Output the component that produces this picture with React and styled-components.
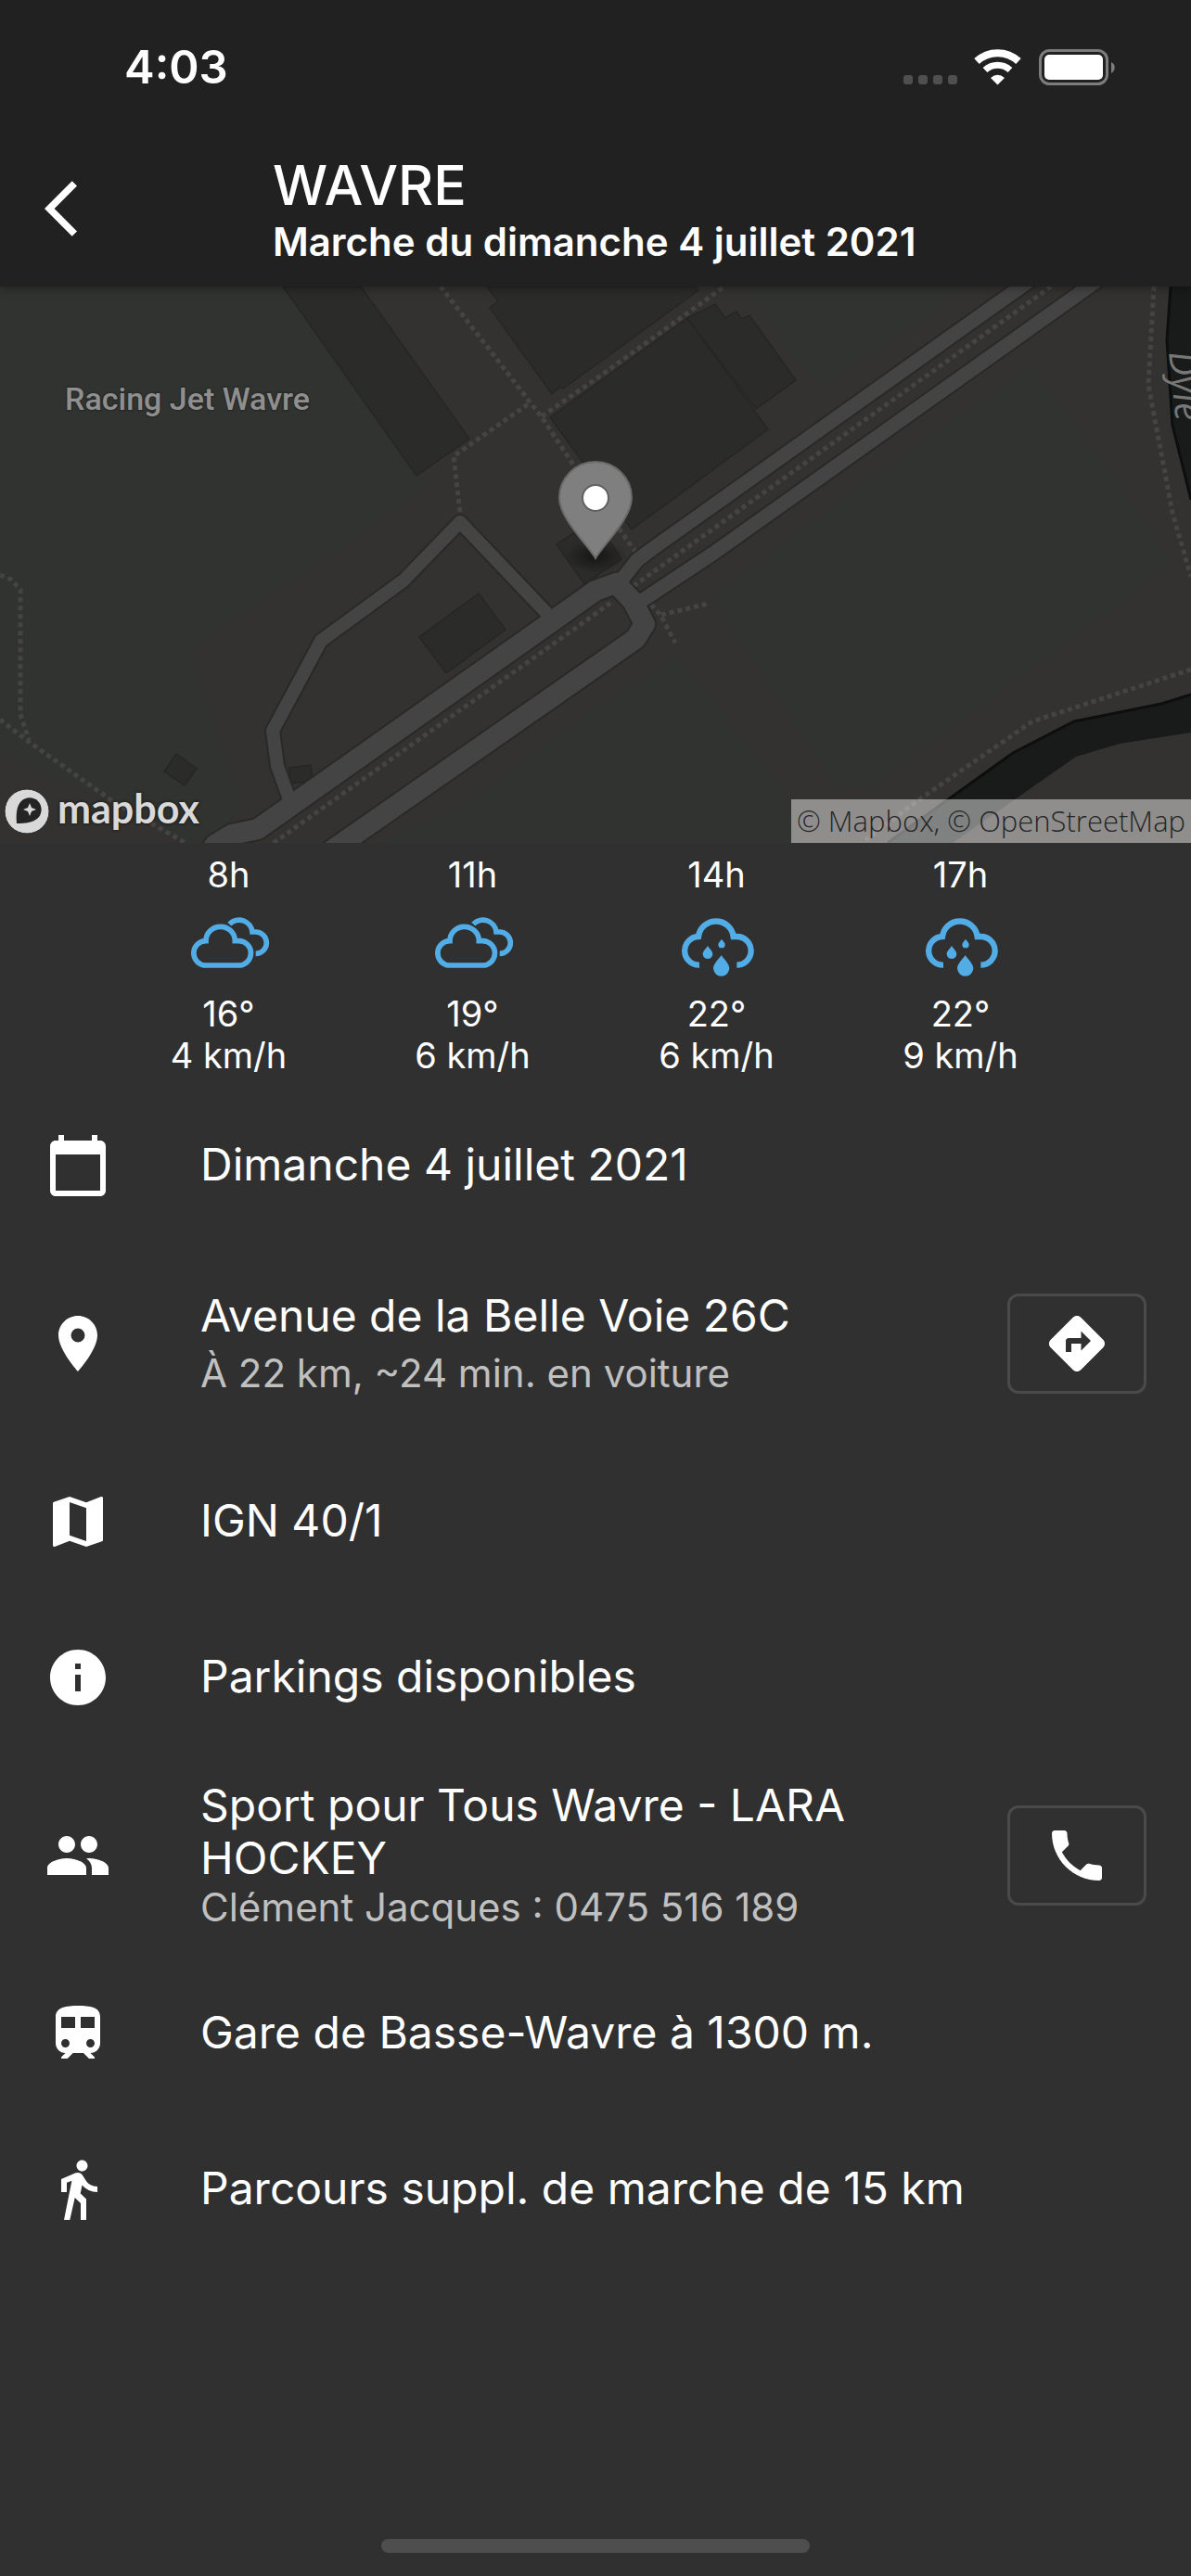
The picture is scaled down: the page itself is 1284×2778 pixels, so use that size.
import React from "react";
import styled, { createGlobalStyle } from "styled-components";
import {
  MdArrowBackIos,
  MdCalendarToday,
  MdLocationOn,
  MdMap,
  MdInfo,
  MdPeople,
  MdTrain,
  MdDirectionsWalk,
  MdDirections,
  MdPhone,
} from "react-icons/md";

const GlobalStyle = createGlobalStyle`
  *, *::before, *::after { box-sizing: border-box; }
  body {
    margin: 0;
    background: #303030;
    color: #fff;
    font-family: Inter, "Liberation Sans", sans-serif;
  }
`;

const Screen = styled.div`
  display: flex;
  flex-direction: column;
  min-height: 100vh;
`;

const Header = styled.header`
  position: relative;
  z-index: 1;
  background: #212121;
  box-shadow: 0 2px 10px rgba(0, 0, 0, 0.35);
`;

const StatusBar = styled.div`
  display: flex;
  align-items: center;
  justify-content: space-between;
  height: 141px;
  padding: 4px 82px 0 134px;
`;

const Clock = styled.time`
  font-size: 49px;
  line-height: 60px;
  font-weight: 600;
`;

const StatusIcons = styled.div`
  display: flex;
  align-items: center;
  gap: 16px;
`;

const Toolbar = styled.div`
  display: flex;
  align-items: center;
  gap: 174px;
  height: 168px;
  padding: 0 48px;
`;

const BackButton = styled.button`
  display: flex;
  padding: 0;
  border: 0;
  background: none;
  color: inherit;
  font-size: 72px;
`;

const Title = styled.h1`
  margin: 0;
  font-size: 59px;
  line-height: 72px;
  font-weight: 500;
`;

const Subtitle = styled.p`
  margin: 0;
  font-size: 42px;
  line-height: 50px;
  font-weight: 600;
`;

const MapPanel = styled.section`
  position: relative;
  height: 600px;
  overflow: hidden;
  background: #343230;
`;

const MapDrawing = styled.svg`
  display: block;
  width: 100%;
  height: 100%;
`;

const MapLogo = styled.a`
  position: absolute;
  left: 4px;
  bottom: 6px;
  display: flex;
  align-items: center;
  gap: 8px;
  color: #d9d9d9;
  font-family: Lato, sans-serif;
  font-size: 43px;
  line-height: 50px;
  font-weight: 700;
  text-decoration: none;
  text-shadow: 0 0 3px #1c1c1c, 0 0 3px #1c1c1c;

  span {
    padding-bottom: 6px;
  }
`;

const Attribution = styled.div`
  position: absolute;
  right: 0;
  bottom: 0;
  padding: 0 6px;
  background: rgba(255, 255, 255, 0.45);
  color: #262626;
  font-family: "Open Sans", "Noto Sans", sans-serif;
  font-size: 31px;
  line-height: 47px;
  font-weight: 300;
  white-space: nowrap;

  a {
    color: inherit;
    text-decoration: none;
  }
`;

const Forecast = styled.ul`
  display: grid;
  grid-template-columns: repeat(4, 1fr);
  margin: 0;
  padding: 12px 117px 12px 115px;
  list-style: none;
`;

const Slot = styled.li`
  display: flex;
  flex-direction: column;
  align-items: center;
  font-size: 38px;
  line-height: 45px;
`;

const WeatherIcon = styled.svg`
  width: 90px;
  height: 105px;
`;

const Details = styled.ul`
  margin: 0;
  padding: 0;
  list-style: none;
`;

const Row = styled.li`
  display: flex;
  align-items: center;
  gap: 48px;
  min-height: ${(p) => (p.$tall ? 216 : 168)}px;
  padding: 0 48px;
`;

const RowIcon = styled.span`
  display: flex;
  width: 120px;
  font-size: 72px;
`;

const RowText = styled.div`
  display: flex;
  flex: 1;
  flex-direction: column;
  gap: ${(p) => (p.$dense ? 0 : 9)}px;
  padding-bottom: 3px;
`;

const RowTitle = styled.span`
  font-size: 48px;
  line-height: 57px;
`;

const RowNote = styled.span`
  color: #c0c0c0;
  font-size: 42px;
  line-height: 50px;
`;

const ActionButton = styled.button`
  display: flex;
  align-items: center;
  justify-content: center;
  width: 150px;
  height: 108px;
  padding: 0;
  border: 3px solid #4a4a4a;
  border-radius: 12px;
  background: none;
  color: inherit;
  font-size: 72px;
`;

const HomeIndicator = styled.div`
  width: 36%;
  height: 15px;
  margin: auto auto 25px;
  border-radius: 8px;
  background: #4e4e4e;
`;

function StatusGlyphs() {
  return (
    <StatusIcons>
      <svg width="60" height="40" viewBox="0 0 60 40" fill="#4f4f4f" aria-hidden="true">
        <rect x="0" y="28" width="10" height="10" rx="3" />
        <rect x="16" y="28" width="10" height="10" rx="3" />
        <rect x="32" y="28" width="10" height="10" rx="3" />
        <rect x="48" y="28" width="10" height="10" rx="3" />
      </svg>
      <svg width="52" height="40" viewBox="0 0 52 40" aria-hidden="true">
        <path d="M3 14A33 33 0 0 1 48 14" transform="translate(0 -1)" fill="none" stroke="#fff" strokeWidth="8" />
        <path d="M12 22.500A20 20 0 0 1 39 22.500" fill="none" stroke="#fff" strokeWidth="7" />
        <path d="M18 31q7.500-6.500 15 0l-7.500 7.500z" fill="#fff" />
      </svg>
      <svg width="84" height="40" viewBox="0 0 84 40" aria-hidden="true">
        <rect x="3.500" y="1.500" width="72" height="36" rx="10" fill="none" stroke="#7c7c7c" strokeWidth="3" />
        <rect x="8" y="6" width="63" height="27" rx="5" fill="#fff" />
        <path d="M80 14c5 2 5 9.500 0 12z" fill="#7c7c7c" />
      </svg>
    </StatusIcons>
  );
}

const parks = [
  "0,0 305,0 449,204 463,210 442,228 336,305 205,390 217,438 233,477 262,560 240,585 215,600 197,600 123,560 0,501",
  "806,0 1045,0 888,106 858,80 820,25",
  "1113,84 1195,197 1264,299 1105,418 937,541 904,541 765,335 929,212",
  "410,600 504,556 642,453 730,398 847,545 860,600",
];

const buildings = [
  "305,0 389,0 506,164 449,204",
  "525,0 537,16 528,23 595,116 604,108 607,110 753,4 750,0",
  "593,141 741,34 828,154 681,262",
  "741,34 771,19 782,34 794,27 800,35 808,31 858,101 815,132",
  "600,278 642,251 670,294 630,321",
  "516,331 545,370 481,417 452,378",
  "190,504 212,520 199,538 177,523",
  "312,519 335,516 337,533 313,536",
];

const roads = [
  { width: 14, points: "594,357 496,254 435,317 346,382 294,479 299,517 313,556" },
  { width: 15, points: "664,324 687,295 703,283 1115,-10" },
  { width: 15, points: "684,344 770,287 1188,-10" },
  { width: 22, points: "220,618 232,602 250,591 278,585 642,328 664,320 682,339 695,364 685,380 642,410 355,610" },
];

const footpaths = [
  "475,0 584,141 620,195 685,286",
  "584,140 642,100 781,0",
  "569,127 489,183 496,244",
  "295,600 642,353 658,341",
  "683,323 1133,0",
  "0,311 12,316 22,327 22,461 31,489",
  "0,467 31,491 123,556 200,600",
  "1244,0 1238,106 1264,244 1284,313",
  "1284,413 1113,469 990,554 929,600",
  "702,343 712,354 728,384",
  "713,354 763,342",
];

function StreetMap() {
  return (
    <MapDrawing viewBox="0 0 1284 600" preserveAspectRatio="xMidYMid slice" role="img" aria-label="Carte du lieu de départ">
      <defs>
        <radialGradient id="pinShadow">
          <stop offset="0" stopColor="#111" stopOpacity="0.8" />
          <stop offset="1" stopColor="#111" stopOpacity="0" />
        </radialGradient>
      </defs>
      <rect width="1284" height="600" fill="#343230" />
      {parks.map((p) => (
        <polygon key={p} points={p} fill="#313330" />
      ))}
      <g fill="#191b1a">
        <polygon points="1262,0 1258,58 1264,149 1284,230 1284,0" />
        <polygon points="1284,440 1252,450 1158,469 1092,503 957,600 1027,600 1160,507 1207,493 1284,481" />
      </g>
      <g fill="none" stroke="#0d0f0e" strokeWidth="3">
        <polyline points="1262,0 1258,58 1264,149 1284,230" />
        <polyline points="1284,440 1252,450 1158,469 1092,503 957,600" />
      </g>
      {buildings.map((p) => (
        <polygon key={p} points={p} fill="#2b2b29" stroke="#262625" strokeWidth="1.500" />
      ))}
      {footpaths.map((p) => (
        <polyline key={p} points={p} fill="none" stroke="#454443" strokeWidth="5" strokeDasharray="5 4" />
      ))}
      {roads.map((r) => (
        <polyline key={r.points} points={r.points} fill="none" stroke="#292928" strokeWidth={r.width + 4} strokeLinejoin="round" />
      ))}
      {roads.map((r) => (
        <polyline key={r.points} points={r.points} fill="none" stroke="#444" strokeWidth={r.width} strokeLinejoin="round" />
      ))}
      <text x="70" y="133" fill="#8f8f8f" stroke="#2a2b29" strokeWidth="3" paintOrder="stroke" fontFamily="Roboto, sans-serif" fontSize="34" fontWeight="500">
        Racing Jet Wavre
      </text>
      <text transform="translate(1260 71) rotate(84)" fill="#777" fontFamily="'Open Sans', sans-serif" fontStyle="italic" fontSize="40">
        Dyle
      </text>
      <ellipse cx="642" cy="291" rx="34" ry="18" fill="url(#pinShadow)" />
      <path d="M642 293C634 279 603 250 603 228a39 39 0 0 1 78 0c0 22-31 51-39 65z" fill="#7f7f7f" stroke="#6a6a6a" strokeWidth="2" />
      <circle cx="642" cy="228" r="14" fill="#fff" stroke="#606060" strokeWidth="2" />
    </MapDrawing>
  );
}

function MapboxMark() {
  return (
    <svg width="50" height="50" viewBox="0 0 50 50" aria-hidden="true">
      <circle cx="25" cy="25" r="24" fill="#d9d9d9" stroke="#262626" strokeWidth="1" />
      <path d="M14 38C13 28 14 20 18 15c5-6 14-6 19-1s5 14-1 19c-5 4-12 5-22 5z" fill="#242424" />
      <path d="M28 16l2 5 5 2-5 2-2 5-2-5-5-2 5-2z" fill="#d9d9d9" />
    </svg>
  );
}

const skies = {
  cloudy: (
    <WeatherIcon viewBox="66 -12 270 315" role="img" aria-label="Nuageux">
      <g fill="none" stroke="#52ace6" strokeWidth="17">
        <path d="M126 213A39.500 39.500 0 0 1 126 134A47 46 0 0 1 220 134H232A39.500 39.500 0 0 1 232 213Z" />
        <path d="M202 80A43 43 0 0 1 276 105H287A35 35 0 0 1 287 175" />
      </g>
    </WeatherIcon>
  ),
  rain: (
    <WeatherIcon viewBox="21 -12 270 315" role="img" aria-label="Pluie">
      <path
        d="M99 212A46 46 0 0 1 96 120A57 57 0 0 1 209 120H220A46 46 0 0 1 220 212"
        fill="none"
        stroke="#52ace6"
        strokeWidth="19"
      />
      <g fill="#52ace6">
        <path d="M170 180C178 193 196 208 196 222a26 26 0 0 1-52 0C144 208 162 193 170 180z" />
        <path d="M126 150C131 159 142 167 142 176a16 16 0 0 1-32 0C110 167 121 159 126 150z" />
        <path d="M171 128C174 134 182 139 182 146a11 11 0 0 1-22 0C160 139 168 134 171 128z" />
      </g>
    </WeatherIcon>
  ),
};

const forecast = [
  { hour: "8h", sky: "cloudy", temp: "16°", wind: "4 km/h" },
  { hour: "11h", sky: "cloudy", temp: "19°", wind: "6 km/h" },
  { hour: "14h", sky: "rain", temp: "22°", wind: "6 km/h" },
  { hour: "17h", sky: "rain", temp: "22°", wind: "9 km/h" },
];

const details = [
  { icon: MdCalendarToday, title: "Dimanche 4 juillet 2021" },
  {
    icon: MdLocationOn,
    title: "Avenue de la Belle Voie 26C",
    note: "À 22 km, ~24 min. en voiture",
    action: { icon: MdDirections, label: "Itinéraire" },
  },
  { icon: MdMap, title: "IGN 40/1" },
  { icon: MdInfo, title: "Parkings disponibles" },
  {
    icon: MdPeople,
    title: "Sport pour Tous Wavre - LARA HOCKEY",
    note: "Clément Jacques : 0475 516 189",
    dense: true,
    action: { icon: MdPhone, label: "Appeler" },
  },
  { icon: MdTrain, title: "Gare de Basse-Wavre à 1300 m." },
  { icon: MdDirectionsWalk, title: "Parcours suppl. de marche de 15 km" },
];

function DetailRow({ icon: Icon, title, note, dense, action }) {
  const ActionIcon = action?.icon;
  return (
    <Row $tall={Boolean(note)}>
      <RowIcon>
        <Icon />
      </RowIcon>
      <RowText $dense={dense}>
        <RowTitle>{title}</RowTitle>
        {note && <RowNote>{note}</RowNote>}
      </RowText>
      {action && (
        <ActionButton type="button" aria-label={action.label}>
          <ActionIcon />
        </ActionButton>
      )}
    </Row>
  );
}

export default function App() {
  return (
    <>
      <GlobalStyle />
      <Screen>
        <Header>
          <StatusBar>
            <Clock>4:03</Clock>
            <StatusGlyphs />
          </StatusBar>
          <Toolbar>
            <BackButton type="button" aria-label="Retour">
              <MdArrowBackIos />
            </BackButton>
            <div>
              <Title>WAVRE</Title>
              <Subtitle>Marche du dimanche 4 juillet 2021</Subtitle>
            </div>
          </Toolbar>
        </Header>
        <main>
          <MapPanel>
            <StreetMap />
            <MapLogo href="#mapbox">
              <MapboxMark />
              <span>mapbox</span>
            </MapLogo>
            <Attribution>
              <a href="#mapbox-about">© Mapbox</a>, <a href="#osm">© OpenStreetMap</a>
            </Attribution>
          </MapPanel>
          <Forecast>
            {forecast.map((f) => (
              <Slot key={f.hour}>
                <span>{f.hour}</span>
                {skies[f.sky]}
                <span>{f.temp}</span>
                <span>{f.wind}</span>
              </Slot>
            ))}
          </Forecast>
          <Details>
            {details.map((d) => (
              <DetailRow key={d.title} {...d} />
            ))}
          </Details>
        </main>
        <HomeIndicator />
      </Screen>
    </>
  );
}
